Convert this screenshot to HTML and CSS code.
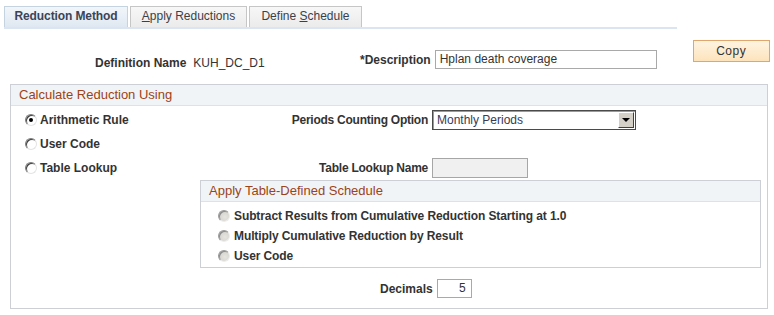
FILE: index.html
```html
<!DOCTYPE html>
<html>
<head>
<meta charset="utf-8">
<link rel="stylesheet" href="styles.css">
</head>
<body>
<div class="tabs">
  <div class="tab tab1 active">Reduction Method</div>
  <div class="tab tab2"><u>A</u>pply Reductions</div>
  <div class="tab tab3">Define <u>S</u>chedule</div>
</div>
<div class="header">
  <div class="defname"><span class="lbl">Definition Name</span><span class="val">KUH_DC_D1</span></div>
  <div class="desc"><span class="lbl">*Description</span><div class="field desc-input">Hplan death coverage</div></div>
  <div class="copy">Copy</div>
</div>
<div class="group outer">
  <div class="gb-head">Calculate Reduction Using</div>
  <div class="outer-body">
    <div class="opt"><span class="radio checked"></span>Arithmetic Rule</div>
    <div class="flabel">Periods Counting Option</div>
    <div class="fcell"><div class="select"><span class="sel-text">Monthly Periods</span><span class="sel-btn"><span class="tri"></span></span></div></div>

    <div class="opt"><span class="radio"></span>User Code</div>
    <div class="flabel"></div>
    <div class="fcell"></div>

    <div class="opt"><span class="radio"></span>Table Lookup</div>
    <div class="flabel">Table Lookup Name</div>
    <div class="fcell"><div class="field lookup-input"></div></div>

    <div class="group inner">
      <div class="gb-head">Apply Table-Defined Schedule</div>
      <div class="inner-body">
        <div class="iopt"><span class="radio disabled"></span>Subtract Results from Cumulative Reduction Starting at 1.0</div>
        <div class="iopt"><span class="radio disabled"></span>Multiply Cumulative Reduction by Result</div>
        <div class="iopt"><span class="radio disabled"></span>User Code</div>
      </div>
    </div>

    <div class="dec-row"><span class="lbl">Decimals</span><div class="field dec-input">5</div></div>
  </div>
</div>
</body>
</html>
```
FILE: styles.css
```css
* { box-sizing: border-box; }
body {
  margin: 0;
  font-family: "Liberation Sans", Arial, sans-serif;
  font-size: 12px;
  color: #333;
  background: #fff;
}
.tabs {
  display: flex;
  gap: 2px;
  margin: 6px 0 0 4px;
  width: 673px;
  border-bottom: 2px solid #dbe5f1;
}
.tab {
  height: 21px;
  line-height: 19px;
  text-align: center;
  border: 1px solid #c6c6c6;
  border-bottom: none;
  background: linear-gradient(#f7f7f7, #ebebeb);
  color: #3a3f4a;
}
.tab u { text-decoration: underline; }
.tab1 { width: 124px; }
.tab2 { width: 117px; }
.tab3 { width: 113px; }
.tab.active {
  font-weight: bold;
  background: linear-gradient(#f2f6fa, #dfe8f2);
  border-color: #c5d2df;
  color: #3b4455;
  letter-spacing: -0.1px;
}
.header {
  display: flex;
  align-items: flex-start;
  height: 55px;
}
.lbl { font-weight: bold; color: #333; }
.defname {
  margin: 27px 0 0 95px;
  width: 265px;
  line-height: 14px;
}
.defname .val { margin-left: 7px; }
.desc {
  margin-top: 21px;
  display: flex;
  align-items: center;
}
.field {
  border: 1px solid #a9a9a9;
  background: #fff;
  height: 19px;
  line-height: 17px;
  padding: 0 4px;
  color: #333;
}
.desc-input { width: 222px; margin-left: 4px; }
.copy {
  margin: 11px 0 0 36px;
  width: 77px;
  height: 22px;
  line-height: 20px;
  text-align: center;
  border: 1px solid #e0a66c;
  background: linear-gradient(#fff4e2, #fde3bc);
  color: #333;
  letter-spacing: 0.5px;
}
.group {
  border: 1px solid #ccd0d6;
  background: #fff;
}
.outer {
  margin-left: 10px;
  width: 758px;
  height: 225px;
}
.gb-head {
  height: 21px;
  line-height: 20px;
  background: #f1f4f6;
  border-bottom: 1px solid #dde2e6;
  padding-left: 8px;
  color: #9c4318;
  font-size: 13px;
}
.outer-body {
  display: grid;
  grid-template-columns: 189px 228px 1fr;
  grid-auto-rows: auto;
  padding-top: 2px;
}
.opt, .flabel, .fcell {
  height: 24px;
  display: flex;
  align-items: center;
}
.opt {
  padding-left: 14px;
  font-weight: bold;
}
.flabel {
  justify-content: flex-end;
  font-weight: bold;
  letter-spacing: -0.25px;
}
.fcell { padding-left: 4px; }
.radio {
  display: inline-block;
  width: 12px;
  height: 12px;
  border-radius: 50%;
  border: 1px solid;
  border-color: #7d7d7d #e4e4e4 #e4e4e4 #7d7d7d;
  background: #fff;
  box-shadow: inset 1px 1px 0 #404040;
  margin-right: 3px;
  position: relative;
  flex: none;
}
.radio.checked::after {
  content: "";
  position: absolute;
  left: 3px;
  top: 3px;
  width: 4px;
  height: 4px;
  border-radius: 50%;
  background: #000;
}
.radio.disabled {
  background: radial-gradient(circle at 60% 60%, #e6e5e0, #cfcdc6);
  box-shadow: inset 1px 1px 0 #8a8a8a;
  border-color: #9a9a9a #ededed #ededed #9a9a9a;
  margin-right: 4px;
}
.select {
  width: 204px;
  height: 20px;
  border: 1px solid #4a4a4a;
  box-shadow: inset 1px 1px 0 #9a9a9a;
  display: flex;
  align-items: center;
  justify-content: space-between;
  background: #fff;
}
.sel-text { padding-left: 4px; color: #3a3a55; }
.sel-btn {
  width: 16px;
  height: 16px;
  margin-right: 1px;
  background: #d4d0c8;
  border: 1px solid;
  border-color: #fff #404040 #404040 #fff;
  display: flex;
  align-items: center;
  justify-content: center;
}
.tri {
  width: 0;
  height: 0;
  border-left: 4px solid transparent;
  border-right: 4px solid transparent;
  border-top: 4px solid #000;
}
.lookup-input {
  width: 96px;
  background: #f0f0f0;
  border-color: #a6a6a6;
  height: 20px;
}
.inner {
  grid-column: 2 / 4;
  margin-right: 6px;
}
.inner-body {
  padding: 4px 0 1px 17px;
}
.iopt {
  height: 20px;
  display: flex;
  align-items: center;
  font-weight: bold;
  letter-spacing: -0.1px;
}
.dec-row {
  grid-column: 2 / 4;
  display: flex;
  align-items: center;
  margin-top: 11px;
  padding-left: 180px;
}
.dec-input {
  width: 35px;
  margin-left: 4px;
  text-align: right;
  padding-right: 5px;
}
```
